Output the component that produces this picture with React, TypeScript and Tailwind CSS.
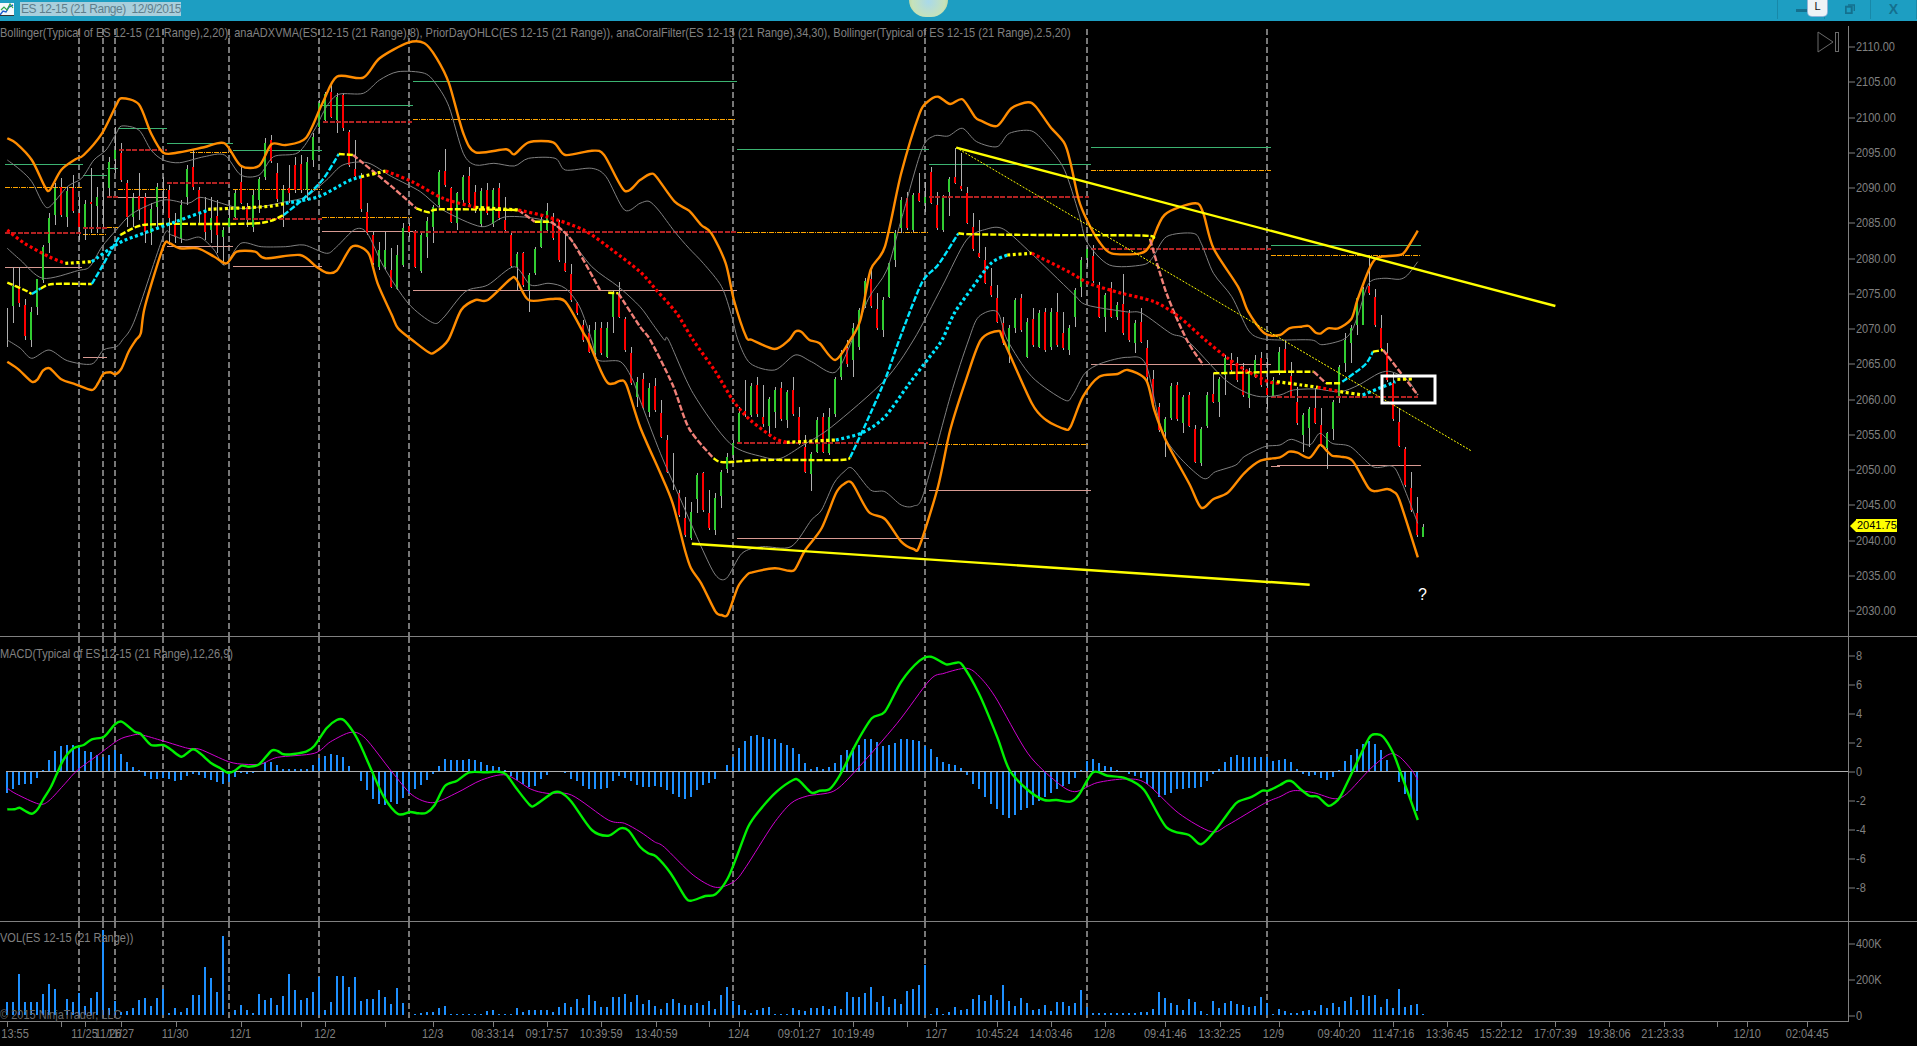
import React from "react";

type Crop = [number, number];
const A: Crop = [0, 0], B: Crop = [640, 0], C: Crop = [1277, 0];
const D: Crop = [0, 340], E: Crop = [640, 340], F: Crop = [1277, 340];
const G: Crop = [0, 640], H: Crop = [640, 640], I: Crop = [1277, 640];

const pts = (...segs: [Crop, number[]][]) =>
  segs
    .map(([c, a]) => {
      const out: string[] = [];
      for (let i = 0; i < a.length; i += 2) out.push(`${(c[0] + a[i] / 2.45).toFixed(1)},${(c[1] + a[i + 1] / 3).toFixed(1)}`);
      return out.join(" ");
    })
    .join(" ");

const smooth = (s: string) => {
  const p = s.trim().split(/\s+/).map((q) => q.split(",").map(Number));
  let d = `M${p[0][0]} ${p[0][1]}`;
  const k = 7;
  for (let i = 0; i < p.length - 1; i++) {
    const p0 = p[i - 1] || p[i], p1 = p[i], p2 = p[i + 1], p3 = p[i + 2] || p2;
    const c1x = p1[0] + (p2[0] - p0[0]) / k, c1y = p1[1] + (p2[1] - p0[1]) / k;
    const c2x = p2[0] - (p3[0] - p1[0]) / k, c2y = p2[1] - (p3[1] - p1[1]) / k;
    d += `C${c1x.toFixed(1)} ${c1y.toFixed(1)} ${c2x.toFixed(1)} ${c2y.toFixed(1)} ${p2[0]} ${p2[1]}`;
  }
  return d;
};

const RED = "#ff0000", YEL = "#ffff00", CYA = "#00e5ff", PNK = "#f08078";
const DRED = "#b22222", GRN = "#3cb371", ORG = "#ffa500", ROS = "#d89a92";

const orangeUpper = pts(
  [A, [18,415,40,430,78,480,110,560,122,570,150,510,185,478,205,465,250,400,285,315,298,295,340,313,370,400,400,458,440,457,500,442,550,430,590,497,635,497,665,433,700,435,750,413,790,310,825,230,890,233,930,175,1000,128,1040,130,1070,175,1100,250,1135,400,1165,457,1240,448,1260,463,1295,427,1355,427,1385,465,1450,452,1480,465,1530,572,1568,540]],
  [B, [25,522,40,530,85,605,120,632,150,675,175,700,210,790,230,900,260,1010,275,1020]],
  [E, [330,27,365,0]],
  [B, [380,995,395,995,415,1020]],
  [E, [440,10,478,60,515,0]],
  [B, [540,960,565,810,600,740,640,520,685,340,705,305,730,290,760,312,790,298,820,350,835,362,875,378,910,325,950,307,970,320,1005,380,1040,430,1055,490,1075,600,1095,660,1125,725,1155,760,1225,760,1250,735,1285,645,1360,610,1380,640,1405,745,1465,860,1490,935,1530,1000,1568,1005]],
  [C, [30,985,60,980,78,978,95,998,108,1000,125,985,150,985,182,957,197,900,225,810,240,778,255,770,300,765,315,752,345,692]]
);
const orangeLower = pts(
  [D, [18,65,45,88,78,125,92,118,105,92,122,85,150,118,185,133,225,150,240,130,253,102,270,97,283,103,298,85,315,35,333,0]],
  [A, [345,1000,355,920,400,740,415,730,440,745,485,745,525,770,555,790,580,755,625,755,650,775,735,765,775,800,800,818,825,812,860,742,885,742,905,765,925,850,960,945,975,985,1010,1020]],
  [D, [1050,37,1065,37,1098,0]],
  [A, [1130,930,1165,900,1195,900,1250,838,1265,838,1295,900,1350,897,1385,905,1430,1000,1440,1020]],
  [D, [1475,100,1490,130,1505,130,1520,122,1535,135,1568,260]],
  [E, [50,400,80,490,110,630,125,685,150,730,185,815,200,825,215,823,240,740,262,705,275,697,330,685,365,692,380,688,405,630,445,565,480,460,500,432,520,430,560,515,600,537,640,605,670,627,685,617,730,440,760,270,800,115,835,0]],
  [B, [878,993,890,1020]],
  [E, [960,190,995,240,1040,267,1055,260,1085,170,1125,110,1170,102,1195,90,1240,120,1260,210,1290,305,1345,430,1375,503,1405,477,1440,458,1480,400,1520,362,1568,352]],
  [F, [30,335,50,338,80,353,105,315,120,330,135,347,155,350,185,362,225,445,245,453,270,447,285,455,300,480,345,652]]
);
const grayUpper = pts(
  [A, [18,480,50,510,78,545,105,610,122,620,165,560,200,535,230,480,260,450,285,400,298,378,340,390,370,450,400,480,440,488,500,470,550,465,590,525,635,525,670,470,730,458,770,390,800,320,830,283,890,280,930,240,975,215,1040,220,1070,255,1100,320,1135,460,1165,495,1210,490,1260,498,1295,475,1360,475,1385,510,1450,505,1485,530,1530,630,1568,610]],
  [B, [22,604,45,630,85,695,120,745,155,790,200,860,225,950,240,1020]],
  [E, [270,70,330,90,380,45,420,65,478,97,520,0]],
  [B, [560,895,605,810,640,660,690,450,720,408,755,408,790,385,825,425,875,440,905,400,960,393,1000,440,1040,510,1075,640,1095,725,1150,795,1230,795,1255,775,1290,710,1355,700,1375,730,1405,820,1450,890,1490,990,1520,1015,1568,1020]],
  [F, [85,0,110,14,160,0]],
  [C, [182,995,200,940,225,850,260,835,300,838,320,825,345,785]]
);
const grayLower = pts(
  [D, [18,0,50,25,78,55,120,30,165,62,225,72,253,30,285,20,300,0]],
  [A, [330,960,400,710,420,705,455,720,490,712,525,750,550,795,590,730,640,740,700,740,745,735,800,760,825,740,870,688,900,700,940,800,1000,910,1060,968,1085,955,1140,875,1195,855,1260,800,1300,855,1345,850,1385,865,1420,920,1450,1020]],
  [D, [1465,60,1520,65,1550,120,1568,180]],
  [E, [50,340,100,480,150,620,185,705,212,715,250,640,300,620,370,620,420,540,445,510,475,430,500,395,520,385,565,450,600,455,640,495,670,498,695,460,760,170,805,0]],
  [B, [830,950,875,935,900,1020]],
  [E, [960,110,1040,180,1060,165,1090,100,1130,70,1195,52,1240,75,1285,290,1375,412,1410,395,1460,375,1480,350,1530,320,1568,315]],
  [F, [35,298,80,315,105,280,135,310,180,320,235,380,280,378,300,410,345,550]]
);
const grayMid = pts(
  [A, [18,745,50,780,105,835,190,812,220,800,250,740,285,690,325,640,400,600,460,610,490,592,530,605,590,625,640,620,700,605,750,590,800,540,840,495,900,488,960,530,1030,575,1085,630,1180,680,1240,650,1330,660,1385,700,1450,800,1515,860,1568,920]],
  [B, [30,970,60,1020]],
  [E, [70,0,130,160,220,310,300,350,345,355,400,315,470,260,600,120,670,0]],
  [B, [740,860,800,720,850,687,890,687,950,750,1060,880,1095,915,1190,935,1230,940,1300,1000,1340,1020]],
  [E, [1430,115,1480,155,1520,170,1568,165]],
  [F, [40,150,95,147,155,155,200,135,250,100,280,95,320,120,345,165]]
);

const dotted: [string, [Crop, number[]][]][] = [
  [RED, [[A, [18,690,60,730,120,770,160,790]]]],
  [YEL, [[A, [160,790,225,785]]]],
  [CYA, [[A, [225,785,290,730,340,705,430,665,510,630]]]],
  [YEL, [[A, [510,628,650,620,700,610]]]],
  [CYA, [[A, [700,610,780,590,850,545,885,530]]]],
  [YEL, [[A, [885,530,945,513]]]],
  [RED, [[A, [945,513,1010,545,1085,595,1165,622]]]],
  [YEL, [[A, [1165,622,1270,630]]]],
  [RED, [[A, [1270,630,1340,650,1430,690,1500,750,1568,815]], [B, [40,870,90,940,130,1020]], [E, [185,95,230,185,270,240,330,295,360,307]]]],
  [YEL, [[E, [360,307,480,300]]]],
  [CYA, [[E, [480,300,545,278,600,230,660,130,710,50,740,0]], [B, [770,940,810,870,860,790,900,765]]]],
  [YEL, [[B, [900,765,960,760]]]],
  [RED, [[B, [960,760,1050,815,1100,850,1180,880,1260,905,1320,950,1385,1020]], [E, [1440,55,1490,95,1540,125,1568,130]]]],
  [YEL, [[F, [0,125,60,135,100,142]]]],
  [RED, [[F, [100,142,155,155]]]],
  [YEL, [[F, [155,155,210,165]]]],
  [CYA, [[F, [210,165,250,145,290,125]]]],
  [YEL, [[F, [295,118,335,117]]]],
];
const dashed: [string, [Crop, number[]][]][] = [
  [YEL, [[A, [18,848,60,870,78,882]]]],
  [CYA, [[A, [78,882,100,865]]]],
  [YEL, [[A, [100,865,130,852,225,852]]]],
  [CYA, [[A, [225,852,250,800,275,745,295,705]]]],
  [YEL, [[A, [295,705,340,678,400,672,630,670,695,645]]]],
  [CYA, [[A, [695,645,740,600,790,540,830,462]]]],
  [YEL, [[A, [830,462,865,465]]]],
  [PNK, [[A, [865,465,960,560,1020,625]]]],
  [YEL, [[A, [1020,625,1050,637,1080,628,1270,630]]]],
  [PNK, [[A, [1270,630,1310,665]]]],
  [YEL, [[A, [1310,665,1350,665]]]],
  [PNK, [[A, [1350,665,1400,720,1470,870]]]],
  [YEL, [[A, [1490,878,1515,880]]]],
  [PNK, [[A, [1515,880,1568,980]], [E, [25,0,80,135,120,265,180,355]]]],
  [YEL, [[E, [180,355,205,367,300,360,490,360,515,352]]]],
  [CYA, [[E, [515,352,550,260,600,120,635,0]], [B, [690,850,730,795,780,700]]]],
  [YEL, [[B, [780,700,815,703,980,705,1240,707,1250,720]]]],
  [PNK, [[B, [1250,720,1290,880,1340,1020]], [E, [1380,75]]]],
  [YEL, [[E, [1405,100,1568,95]], [F, [0,95,90,95]]]],
  [PNK, [[F, [90,95,120,130]]]],
  [YEL, [[F, [120,130,155,130]]]],
  [CYA, [[F, [160,125,215,75,235,35]]]],
  [YEL, [[F, [235,35,260,30]]]],
  [PNK, [[F, [260,30,345,165]]]],
];

type HL = [Crop, number, number, number];
const greens: HL[] = [[A,12,203,493],[A,203,262,526],[A,262,290,505],[A,290,408,385],[A,408,570,430],[A,570,790,451],[A,790,1012,316],[A,1012,1568,244],[B,0,238,244],[B,238,708,448],[B,708,1105,493],[B,1105,1545,441],[B,1545,1568,736],[C,0,353,736]];
const oranges: HL[] = [[A,12,200,562],[A,203,260,703],[A,262,290,682],[A,290,408,568],[A,465,565,457],[A,572,790,568],[A,790,1010,652],[A,1012,1568,358],[B,0,235,358],[B,238,705,697],[E,708,1100,313],[B,1105,1545,511],[B,1545,1568,766],[C,0,350,766]];
const reds: HL[] = [[A,12,200,695],[A,203,262,680],[A,262,290,588],[A,292,408,446],[A,408,568,546],[A,572,790,654],[A,792,1010,362],[A,1012,1568,692],[B,0,235,692],[E,238,705,306],[B,708,1100,588],[B,1105,1545,744],[E,1545,1568,168],[F,0,345,168]];
const roses: HL[] = [[A,12,200,802],[D,203,262,52],[A,290,408,592],[A,410,570,737],[A,570,790,799],[A,790,1012,694],[A,1012,1568,871],[B,0,238,871],[E,238,708,595],[E,708,1105,451],[E,1105,1545,73],[E,1545,1568,377],[F,0,353,376]];

const candles: number[][] = [
[2,925,1040],[1,858,918,800,968],[0,858,908,800,920],[0,915,1008,898,1020],[1,935,1020,920,1042],[1,838,922,838,945],[1,740,840,735,850],[1,655,730,640,760],[1,565,645,550,675],[0,560,645,535,650],
[1,572,650,560,680],[0,565,632,525,640],[0,640,680,590,720],[1,612,680,600,720],[0,605,612,505,700],[1,590,618,560,700],[2,545,680],[1,487,565,470,590],[1,450,478,380,520],[0,460,540,430,545],
[0,550,650,540,680],[1,595,650,580,680],[0,588,630,520,660],[0,590,695,580,730],[1,628,700,610,735],[1,560,620,550,690],[2,530,640],[0,570,655,555,735],[0,665,710,640,730],[1,615,715,600,730],
[1,508,590,495,615],[0,502,560,450,570],[0,570,635,560,670],[0,640,695,590,720],[1,655,690,590,730],[0,648,705,600,760],[1,690,712,680,795],[1,655,680,600,700],[1,578,650,570,660],[0,545,608,500,612],
[0,620,655,610,680],[1,585,680,570,695],[1,538,600,530,640],[1,430,530,415,540],[0,420,482,405,490],[0,520,598,490,605],[1,570,605,555,680],[0,565,580,495,610],[0,495,570,470,580],[0,492,570,465,580],
[1,487,570,470,600],[1,410,480,400,500],[1,310,380,300,400],[1,283,360,275,370],[0,275,350,245,355],[1,290,360,280,400],[0,285,385,278,392],[0,395,495,390,500],[0,508,528,420,530],[0,530,628,520,635],
[0,635,700,610,705],[0,705,790,695,795],[1,750,800,725,810],[1,750,800,695,810],[0,810,860,745,865],[1,765,868,735,870],[1,685,795,670,800],[0,678,695,670,710],[0,695,800,690,805],[1,705,812,695,818],
[1,663,710,650,775],[1,622,680,615,730],[1,517,615,510,620],[0,513,555,448,560],[0,565,665,560,670],[1,580,670,575,690],[1,532,600,525,610],[0,528,610,500,615],[0,575,630,555,640],[1,573,672,565,682],
[0,570,640,550,645],[1,570,672,565,680],[0,565,655,550,660],[0,660,690,590,695],[0,705,798,700,805],[1,762,800,755,870],[0,760,855,755,860],[1,825,870,820,935],[1,748,820,740,825],[1,660,740,650,745],
[1,632,690,610,700],[0,650,715,640,720],[0,665,780,660,785],[0,790,812,695,815],[0,822,900,792,905],[0,910,940,905,945],[0,975,1020,960,1025],[0,1000,1055,975,1060],[1,990,1060,965,1080],[0,985,1060,965,1065],
[1,985,1070,965,1075],[1,880,950,870,1000],[0,885,950,845,955],[0,958,1050,950,1055],[0,1060,1150,1040,1155],[1,1145,1190,1130,1220],[0,1138,1225,1120,1230],[1,1165,1235,1150,1250],[0,1158,1230,1135,1235],[0,1238,1310,1200,1315],
[0,1320,1415,1305,1420],[2,1360,1470],[0,1480,1545,1470,1550],[0,1555,1605,1490,1610],[1,1535,1615,1505,1620],[1,1425,1498,1420,1540],[0,1420,1530,1415,1535],[0,1538,1585,1470,1590],[1,1495,1590,1480,1605],[1,1417,1488,1410,1525],
[1,1372,1408,1360,1420],[1,1330,1365,1320,1380],[1,1240,1325,1220,1330],[0,1232,1242,1140,1250],[1,1158,1245,1150,1250],[0,1155,1242,1130,1250],[0,1250,1272,1155,1280],[1,1198,1278,1190,1310],[1,1170,1235,1160,1285],[0,1165,1258,1145,1262],
[1,1175,1260,1170,1285],[0,1170,1242,1130,1248],[0,1250,1330,1220,1335],[0,1342,1415,1305,1420],[1,1362,1422,1355,1472],[1,1260,1355,1250,1360],[0,1252,1355,1240,1360],[1,1250,1360,1225,1365],[1,1138,1242,1130,1250],[1,1060,1130,1050,1140],
[0,1045,1092,1020,1100],[1,985,1080,970,1132],[1,930,1040,925,1050],[1,842,918,835,925],[0,838,918,805,925],[0,928,985,878,990],[1,900,990,890,1010],[1,790,890,785,895],[1,698,780,690,800],[1,600,685,590,700],
[0,595,685,575,690],[1,585,690,580,695],[0,580,602,520,605],[1,590,610,545,635],[0,515,608,500,612],[0,615,685,575,690],[1,590,690,585,695],[1,537,575,530,648],[0,532,548,445,552],[0,558,568,460,572],
[0,580,670,562,672],[0,680,748,640,752],[0,760,770,660,775],[0,780,848,740,852],[0,858,885,805,890],[0,895,965,855,970],[0,970,1030,950,1035],[1,985,1055,975,1090],[1,900,985,895,1000],[0,895,990,882,995],
[1,965,1070,955,1075],[0,958,1035,925,1040],[1,940,1040,930,1045],[0,935,1050,925,1055],[1,935,1042,925,1050],[0,935,1035,880,1040],[0,1000,1045,935,1050],[1,985,1050,975,1065],[1,870,950,865,980],[1,780,860,770,890],
[1,748,775,740,800],[0,768,843,735,848],[0,855,950,845,955],[1,885,950,880,995],[0,865,950,845,955],[1,915,950,905,960],[0,912,1000,822,1005],[0,940,1020,930,1025],[1,968,1030,960,1060],[0,965,1025,925,1030],
[0,1045,1130,1020,1145],[0,1138,1220,1110,1225],[0,1220,1290,1210,1295],[1,1258,1295,1250,1370],[1,1158,1255,1150,1260],[0,1155,1258,1145,1262],[1,1192,1270,1185,1300],[0,1185,1278,1175,1282],[0,1288,1385,1275,1390],[1,1288,1390,1280,1398],
[1,1185,1278,1175,1285],[0,1182,1205,1120,1210],[1,1138,1205,1130,1252],[1,1075,1125,1065,1185],[0,1080,1110,1060,1115],[0,1090,1140,1070,1145],[0,1110,1185,1090,1190],[1,1115,1195,1105,1225],[1,1080,1130,1065,1135],[0,1075,1155,1055,1160],
[0,1165,1185,1075,1228],[1,1140,1190,1130,1195],[1,1055,1115,1040,1125],[0,1048,1115,1020,1120],[0,1128,1190,1085,1195],[0,1205,1270,1160,1275],[1,1245,1305,1240,1355],[1,1228,1285,1222,1340],[0,1225,1268,1165,1272],[0,1275,1335,1225,1340],
[1,1300,1345,1295,1408],[1,1207,1288,1200,1320],[1,1102,1195,1095,1210],[1,1020,1090,1000,1115],[1,985,1030,975,1090],[1,895,975,890,1005],[1,868,975,860,975],[0,858,880,775,885],[0,890,975,868,980],[0,985,1045,945,1050],
[0,1060,1140,1030,1145],[0,1150,1258,1120,1262],[0,1265,1338,1225,1342],[0,1348,1455,1340,1460],[0,1465,1530,1417,1535],[0,1540,1605,1490,1610],[1,1582,1610,1572,1612],
];

const hist = [-62,-50,-40,-37,-37,-18,5,35,62,78,80,80,72,62,60,50,45,50,65,55,30,15,5,-13,-20,-20,-18,-20,-28,-25,-12,-5,-8,-18,-25,-30,-35,-30,-15,-3,-5,-3,0,30,30,22,10,10,10,10,10,22,42,48,53,50,45,18,0,-28,-55,-80,-95,-98,-90,-95,-78,-65,-50,-40,-25,-5,18,38,36,36,36,38,36,30,22,18,16,5,-12,-25,-35,-45,-42,-20,-8,4,0,-3,-20,-28,-42,-52,-52,-52,-48,-28,-12,-18,-28,-40,-45,-45,-42,-45,-55,-65,-75,-80,-75,-55,-40,-33,-22,0,22,45,73,92,108,112,105,100,98,88,82,72,55,28,10,14,10,14,28,50,65,72,82,100,100,90,78,80,88,100,98,95,92,78,70,46,30,24,20,12,-8,-35,-52,-75,-95,-110,-130,-138,-128,-115,-108,-100,-88,-75,-62,-50,-42,-35,-17,7,32,38,26,18,15,6,4,-5,-12,-18,-35,-50,-75,-68,-62,-52,-50,-48,-48,-45,-28,-5,10,30,46,52,45,44,44,44,45,32,35,38,30,10,-5,-12,-10,-18,-24,-15,5,32,50,70,85,92,85,65,35,0,-30,-65,-85,-117];
const vols = [38,38,122,38,38,38,62,92,78,0,48,38,65,26,50,68,255,20,42,8,12,20,45,50,26,50,78,6,20,8,20,60,60,143,110,68,237,0,14,30,15,6,62,45,50,30,56,122,74,44,50,68,113,14,38,116,116,84,113,42,48,48,74,54,33,80,36,0,3,5,8,10,20,26,4,3,3,3,3,3,11,14,3,3,3,20,10,14,14,14,16,8,24,36,24,48,20,60,42,24,24,54,54,62,38,60,33,44,26,18,36,48,36,30,30,36,30,42,18,60,84,42,30,15,6,14,21,24,4,3,4,21,15,12,21,21,27,18,27,18,69,54,54,66,84,39,57,24,48,33,72,78,90,150,3,21,3,9,24,15,18,48,60,42,60,45,90,42,27,51,36,15,18,30,12,39,39,27,36,75,24,6,6,6,6,6,6,6,6,9,9,18,69,51,36,30,15,48,39,12,3,42,21,36,42,33,30,24,27,54,36,3,18,12,6,6,12,15,12,30,21,36,24,42,54,15,60,57,60,24,48,21,78,24,30,33,3];

const macdGreen = pts(
  [G, [18,508,35,508,48,503,62,513,78,521,92,508,105,480,125,440,140,400,155,360,180,325,205,315,225,298,255,290,280,255,298,245,330,275,345,282,370,315,400,315,420,330,445,350,472,328,490,340,518,370,540,385,558,398,575,392,592,377,610,380,635,373,665,332,680,333,695,343,720,342,750,335,770,318,800,265,825,240,842,240,865,275,885,320,910,390,940,470,975,522,1005,516,1025,520,1045,518,1065,495,1090,438,1120,422,1150,397,1190,397,1220,395,1240,403,1265,445,1298,495,1312,495,1355,458,1375,458,1400,485,1450,570,1490,587,1520,565,1540,572,1568,620]],
  [H, [20,640,40,650,75,700,110,770,125,782,160,768,185,763,215,715,240,640,265,560,290,515,335,455,375,420,390,422,420,458,440,452,465,447,490,405,530,310,568,235,600,215,640,125,685,62,713,50,750,73,775,68,790,75,830,160,875,290,905,390,950,450,990,480,1020,480,1055,485,1075,465,1110,397,1145,407,1190,415,1235,450,1290,562,1345,585,1375,613,1410,570,1450,505,1465,485,1500,470,1525,452,1540,452,1568,435]],
  [I, [25,423,38,425,60,450,80,468,100,470,125,497,140,490,155,470,185,395,225,295,242,283,260,290,285,340,305,405,345,540]]
);
const macdMag = pts(
  [G, [18,445,40,462,95,492,120,482,160,430,190,390,240,345,290,300,320,287,345,284,400,303,460,325,490,328,560,365,600,373,640,372,680,352,770,340,810,305,860,277,895,295,960,395,1010,465,1060,488,1120,458,1180,420,1240,405,1300,447,1340,460,1400,465,1490,540,1530,550,1568,575]],
  [H, [35,605,60,622,130,705,185,742,230,725,260,680,325,555,370,490,410,468,475,453,530,390,630,250,710,120,745,100,800,85,830,108,870,170,950,340,1020,425,1065,455,1120,428,1190,417,1240,430,1320,520,1400,575,1440,555,1530,490,1568,470]],
  [I, [40,452,90,458,140,476,170,462,230,385,275,343,300,350,330,390,345,420]]
);

const sessions = [79, 103, 115, 163, 229, 319, 409, 733, 925, 1087, 1267];
const barX = (k: number) => 7 + 6 * k;

const gx = (v: number) => v / 2.45;
const hx = (v: number) => 640 + v / 2.45;
const ix = (v: number) => 1277 + v / 2.45;

const timeLabels: [number, string][] = [
  [gx(37),"13:55"],[gx(207),"11/25"],[gx(265),"11/26"],[gx(296),"11/27"],[gx(429),"11/30"],[gx(589),"12/1"],[gx(796),"12/2"],[gx(1060),"12/3"],[gx(1207),"08:33:14"],[gx(1340),"09:17:57"],[gx(1473),"10:39:59"],
  [hx(40),"13:40:59"],[hx(242),"12/4"],[hx(390),"09:01:27"],[hx(522),"10:19:49"],[hx(726),"12/7"],[hx(875),"10:45:24"],[hx(1007),"14:03:46"],[hx(1138),"12/8"],[hx(1287),"09:41:46"],[hx(1420),"13:32:25"],[hx(1552),"12/9"],
  [ix(152),"09:40:20"],[ix(285),"11:47:16"],[ix(417),"13:36:45"],[ix(549),"15:22:12"],[ix(682),"17:07:39"],[ix(814),"19:38:06"],[ix(945),"21:23:33"],[ix(1152),"12/10"],[ix(1299),"02:04:45"],
];
const timeTicks = [gx(18),gx(150),gx(208),gx(297),gx(430),gx(590),gx(738),gx(797),gx(944),gx(1062),gx(1208),gx(1340),gx(1473),hx(38),hx(170),hx(243),hx(390),hx(522),hx(655),hx(726),hx(875),hx(1007),hx(1140),hx(1287),hx(1420),ix(5),ix(152),ix(285),ix(417),ix(549),ix(682),ix(814),ix(947),ix(1079),ix(1152),ix(1299)];

const priceTicks = [2110,2105,2100,2095,2090,2085,2080,2075,2070,2065,2060,2055,2050,2045,2040,2035,2030].map((p) => ({ label: p.toFixed(2), y: 47 + (2110 - p) * 7.05 }));
const macdTicks = [8,6,4,2,0,-2,-4,-6,-8].map((v) => ({ label: String(v), y: 772 - v * 14.45 }));
const volTicks = [{ label: "400K", y: 944 }, { label: "200K", y: 980 }, { label: "0", y: 1016 }];

function Axis({ ticks, top, className = "", children }: { ticks: { label: string; y: number }[]; top: number; className?: string; children?: React.ReactNode }) {
  return (
    <div className={`relative w-[69px] border-l border-[#808080] ${className}`}>
      {ticks.map((t) => (
        <div key={t.label} className="absolute left-0 flex -translate-y-1/2 items-center gap-px" style={{ top: t.y - top }}>
          <span className="h-px w-[6px] bg-[#808080]" />
          <span className="scale-y-[1.12] text-[11px] leading-[13px] text-[#808080]">{t.label}</span>
        </div>
      ))}
      {children}
    </div>
  );
}

const Sessions = ({ y1, y2 }: { y1: number; y2: number }) => (
  <g stroke="#777777" strokeWidth={2} strokeDasharray="6 3" shapeRendering="crispEdges">
    {sessions.map((x) => (
      <line key={x} x1={x} x2={x} y1={y1} y2={y2} />
    ))}
  </g>
);

const HLines = ({ list, ...rest }: { list: HL[] } & React.SVGProps<SVGGElement>) => (
  <g shapeRendering="crispEdges" {...rest}>
    {list.map(([c, a, b, y], i) => {
      const yy = Math.round(c[1] + y / 3) + 0.5;
      return <line key={i} x1={c[0] + a / 2.45} x2={c[0] + b / 2.45} y1={yy} y2={yy} />;
    })}
  </g>
);

function PriceChart() {
  return (
    <svg className="block h-[615px] w-[1848px]" viewBox="0 21 1848 615">
      <Sessions y1={29} y2={636} />
      <HLines list={greens} stroke={GRN} strokeWidth={1} />
      <HLines list={roses} stroke={ROS} strokeWidth={1} />
      <HLines list={oranges} stroke={ORG} strokeWidth={1} strokeDasharray="5 1 1 1" />
      <g shapeRendering="crispEdges">
        {candles.map((c, k) => {
          const x = barX(k);
          const [col, top, bot, wt, wb] = c;
          return (
            <g key={k}>
              <line x1={x + 0.5} x2={x + 0.5} y1={(col === 2 ? top : wt) / 3} y2={(col === 2 ? bot : wb) / 3} stroke="#b0b0b0" strokeWidth={1} />
              {col !== 2 && <rect x={x - 1} y={top / 3} width={2} height={(bot - top) / 3} fill={col === 0 ? "#ff0000" : "#32cd32"} />}
            </g>
          );
        })}
      </g>
      <HLines list={reds} stroke={DRED} strokeWidth={2} strokeDasharray="5 1.5" />
      <g fill="none" strokeLinejoin="round">
        <path d={smooth(grayUpper)} stroke="#808080" strokeWidth={1} />
        <path d={smooth(grayLower)} stroke="#808080" strokeWidth={1} />
        <path d={smooth(grayMid)} stroke="#808080" strokeWidth={1} />
        <path d={smooth(orangeUpper)} stroke="#ff8c00" strokeWidth={2.4} />
        <path d={smooth(orangeLower)} stroke="#ff8c00" strokeWidth={2.4} />
        {dashed.map(([col, s], i) => <path key={i} d={smooth(pts(...s))} stroke={col} strokeWidth={2.4} strokeDasharray="6 2" />)}
        {dotted.map(([col, s], i) => <path key={i} d={smooth(pts(...s))} stroke={col} strokeWidth={3.2} strokeDasharray="3 2.6" />)}
      </g>
      <line x1={956.3} y1={147.7} x2={1472} y2={451.3} stroke="#ffff00" strokeWidth={1} strokeDasharray="2 1.5" />
      <line x1={956.3} y1={147.7} x2={1555.4} y2={306} stroke="#ffff00" strokeWidth={2.4} />
      <line x1={691.8} y1={543.7} x2={1309.7} y2={584.7} stroke="#ffff00" strokeWidth={2.4} />
      <rect x={1382} y={376} width={53} height={27} fill="none" stroke="#ffffff" strokeWidth={3} />
      <text x={1422.5} y={600} textAnchor="middle" fontSize={16} fill="#ffffff">?</text>
      <polygon points="1818,32 1833,42 1818,52" fill="none" stroke="#6a6a6a" strokeWidth={1} />
      <rect x={1835.5} y={32.5} width={3} height={19} fill="none" stroke="#6a6a6a" strokeWidth={1} />
    </svg>
  );
}

function MacdChart() {
  return (
    <svg className="block h-[284px] w-[1848px]" viewBox="0 637 1848 284">
      <Sessions y1={637} y2={921} />
      <g shapeRendering="crispEdges">
        {hist.map((v, k) => (
          <rect key={k} x={barX(k) - 1} y={v > 0 ? 772 - v / 3 : 772} width={2} height={Math.abs(v) / 3} fill="#1e90ff" />
        ))}
        <line x1={6} x2={1848} y1={771.5} y2={771.5} stroke="#b0b0b0" strokeWidth={1} />
      </g>
      <g fill="none" strokeLinejoin="round">
        <path d={smooth(macdMag)} stroke="#d000d0" strokeWidth={1} />
        <path d={smooth(macdGreen)} stroke="#00f000" strokeWidth={2.4} />
      </g>
    </svg>
  );
}

function VolChart() {
  return (
    <svg className="block h-[99px] w-[1848px]" viewBox="0 922 1848 99">
      <Sessions y1={922} y2={1021} />
      <g shapeRendering="crispEdges">
        {vols.map((v, k) => (
          <rect key={k} x={barX(k) - 1} y={1015 - v / 3} width={2} height={v / 3} fill="#1e90ff" />
        ))}
      </g>
    </svg>
  );
}

const legendClass = "absolute left-0 scale-y-[1.12] whitespace-pre text-[11px] leading-[13px] text-[#808080]";

export default function App() {
  return (
    <div className="flex h-[1046px] w-[1917px] flex-col overflow-hidden bg-black font-['Liberation_Sans',Arial,sans-serif]">
      <header className="relative flex h-[21px] items-start overflow-hidden bg-[#1d9ec2]">
        <svg className="mt-[3px] h-[13px] w-[14px] shrink-0" viewBox="0 0 14 13">
          <rect width="14" height="13" fill="#f4f8fa" />
          <path d="M0 12 L3 8 L6 9 L9 4 L13 2" fill="none" stroke="#1f5fd0" strokeWidth="1.4" />
          <path d="M1 7 L4 4 L7 7 L10 1 L13 5" fill="none" stroke="#2fa84a" strokeWidth="1.2" />
          <path d="M0 12.5 H14" stroke="#333" strokeWidth="1" />
        </svg>
        <div className="ml-[6px] mt-[2px] flex h-[14px] w-[161px] items-center bg-[#a9cfdc] pl-px">
          <span className="scale-y-[1.1] whitespace-pre text-[12px] leading-none tracking-[-0.45px] text-[#5f7f8c]">ES 12-15 (21 Range)  12/9/2015</span>
        </div>
        <div className="absolute left-[909px] top-[-17px] h-[34px] w-[39px] rounded-full bg-[radial-gradient(circle_at_50%_55%,#a9d9ea_0%,#c6e2ba_60%,#b4c878_100%)]" />
        <div className="ml-auto flex h-[19px]">
          <div className="flex w-[47px] items-start justify-start border-l border-[#1888a8] pl-[18px] pt-[9px]">
            <span className="h-[3px] w-[11px] bg-[#14708e]" />
          </div>
          <div className="flex w-[46px] items-start justify-center border-l border-[#1888a8] pl-[5px] pt-[4px]">
            <svg className="h-[10px] w-[10px]" viewBox="0 0 10 10" fill="none" stroke="#14708e" strokeWidth="1.4">
              <rect x="0.7" y="2.7" width="6" height="6.6" strokeWidth="2" />
              <path d="M3 1 H9.3 V7" />
            </svg>
          </div>
          <div className="flex w-[47px] items-start justify-center border-x border-[#1888a8] pt-[1px]">
            <span className="text-[14px] font-bold leading-[16px] text-[#14708e]">X</span>
          </div>
        </div>
        <div className="absolute left-[1808px] top-0 flex h-[16px] w-[19px] items-start justify-center rounded-b-sm bg-[#eef3f6] shadow-[0_0_0_1px_#8fb4d8]">
          <span className="text-[11px] leading-[13px] text-[#111]">L</span>
        </div>
      </header>

      <section className="relative flex h-[616px] border-b border-[#808080]">
        <PriceChart />
        <Axis ticks={priceTicks} top={26} className="mt-[5px]">
          <div className="absolute left-[1px] top-[493px] flex items-center">
            <span className="h-0 w-0 border-y-[6.5px] border-r-[6px] border-y-transparent border-r-[#ffff00]" />
            <span className="h-[13px] w-[41px] bg-[#ffff00] pl-px text-[11px] leading-[13px] text-black">2041.75</span>
          </div>
        </Axis>
        <div className={`${legendClass} top-[6px]`}>Bollinger(Typical of ES 12-15 (21 Range),2,20), anaADXVMA(ES 12-15 (21 Range),8), PriorDayOHLC(ES 12-15 (21 Range)), anaCoralFilter(ES 12-15 (21 Range),34,30), Bollinger(Typical of ES 12-15 (21 Range),2.5,20)</div>
      </section>

      <section className="relative flex h-[285px] border-b border-[#808080]">
        <MacdChart />
        <Axis ticks={macdTicks} top={637} />
        <div className={`${legendClass} top-[11px]`}>MACD(Typical of ES 12-15 (21 Range),12,26,9)</div>
      </section>

      <section className="relative flex h-[100px]">
        <div className="border-b border-[#808080]">
          <VolChart />
        </div>
        <Axis ticks={volTicks} top={922} />
        <div className={`${legendClass} top-[10px]`}>VOL(ES 12-15 (21 Range))</div>
        <div className="absolute left-0 top-[87px] scale-y-[1.12] whitespace-pre text-[11px] leading-[13px] text-[#6a6a6a]">© 2015 NinjaTrader, LLC</div>
      </section>

      <footer className="relative h-[24px] w-[1848px]">
        {timeTicks.map((x) => (
          <span key={x} className="absolute top-0 h-[5px] w-px bg-[#808080]" style={{ left: x }} />
        ))}
        {timeLabels.map(([x, t]) => (
          <span key={t} className="absolute top-[6px] -translate-x-1/2 scale-y-[1.12] whitespace-pre text-[11px] leading-[13px] text-[#808080]" style={{ left: x }}>{t}</span>
        ))}
      </footer>
    </div>
  );
}
